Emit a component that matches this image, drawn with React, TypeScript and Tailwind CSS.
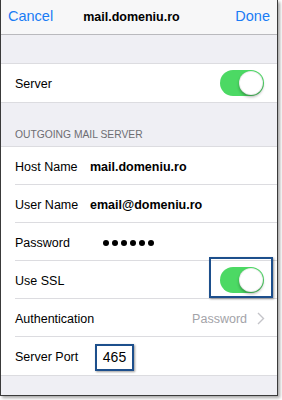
import type { ReactNode } from 'react';

const font = { fontFamily: '"Liberation Sans", Arial, sans-serif' };

function Toggle() {
  return (
    <div className="relative w-[44px] h-[26px] rounded-full bg-[#4cd964] shrink-0">
      <div className="absolute right-[1px] top-[1px] w-[24px] h-[24px] rounded-full bg-white shadow-[0_2px_3px_rgba(0,0,0,0.3)] border border-[#d0d0d0]/40" />
    </div>
  );
}

function Row({ label, children, last }: { label: string; children?: ReactNode; last?: boolean }) {
  return (
    <div className="relative h-[38px] pl-[14px]">
      <div className={`flex items-center h-full pr-[13px] ${last ? '' : 'border-b border-[#dcdce0]'}`}>
        <span className="text-[12.5px] text-black w-[75px] shrink-0 pt-[3px]">{label}</span>
        {children}
      </div>
    </div>
  );
}

export default function App() {
  return (
    <div className="w-[282px] h-[400px] bg-white" style={font}>
      <div className="w-[278px] h-[396px] bg-[#efeff4] border-l border-r border-b border-[#3a3a3a] shadow-[2px_2px_3px_rgba(0,0,0,0.35)] overflow-hidden flex flex-col">
        {/* nav bar */}
        <div className="h-[35px] bg-[#f7f7f8] border-b border-[#b9b9bd] flex items-center shrink-0">
          <span className="pl-[7px] text-[14.5px] text-[#1a7cf5]">Cancel</span>
          <span className="ml-[30px] text-[12.5px] font-bold text-black">mail.domeniu.ro</span>
          <span className="ml-auto pr-[7px] text-[14.5px] text-[#1a7cf5]">Done</span>
        </div>

        <div className="h-[28px] shrink-0" />

        {/* server toggle */}
        <div className="h-[40px] bg-white border-t border-b border-[#dcdce0] flex items-center pl-[14px] pr-[13px] shrink-0">
          <span className="text-[12.5px] text-black pt-[3px]">Server</span>
          <div className="ml-auto">
            <Toggle />
          </div>
        </div>

        {/* section header */}
        <div className="h-[43px] flex items-end pl-[14px] pb-[6px] shrink-0">
          <span className="text-[10.3px] text-[#6d6d72] leading-none">OUTGOING MAIL SERVER</span>
        </div>

        <div className="bg-white border-t border-b border-[#dcdce0] shrink-0">
          <Row label="Host Name">
            <span className="text-[12.5px] font-bold text-black pt-[3px]">mail.domeniu.ro</span>
          </Row>
          <Row label="User Name">
            <span className="text-[12.5px] font-bold text-black pt-[3px]">email@domeniu.ro</span>
          </Row>
          <Row label="Password">
            <div className="flex gap-[3px] ml-[13px] pt-[3px]">
              {[0, 1, 2, 3, 4, 5].map((i) => (
                <span key={i} className="w-[6px] h-[6px] rounded-full bg-black" />
              ))}
            </div>
          </Row>
          <Row label="Use SSL">
            <div className="ml-auto">
              <Toggle />
            </div>
            <div className="absolute right-[4px] top-[-4px] w-[64px] h-[41px] border-[2px] border-[#1d4f8c] shadow-[1px_1px_2px_rgba(0,0,0,0.4)]" />
          </Row>
          <Row label="Authentication">
            <span className="ml-auto text-[12.5px] text-[#a3a3a8] pt-[3px]">Password</span>
            <svg width="8" height="13" viewBox="0 0 8 13" className="ml-[10px] mr-[-1px] mt-[2px]">
              <polyline points="1,1 6.5,6.5 1,12" fill="none" stroke="#c4c4c9" strokeWidth="1.4" />
            </svg>
          </Row>
          <Row label="Server Port" last>
            <span className="ml-[5px] mt-[2px] h-[27px] w-[39px] border-[2px] border-[#1d4f8c] shadow-[1px_1px_2px_rgba(0,0,0,0.4)] flex items-center justify-center text-[14px] text-black">
              465
            </span>
          </Row>
        </div>
      </div>
    </div>
  );
}
